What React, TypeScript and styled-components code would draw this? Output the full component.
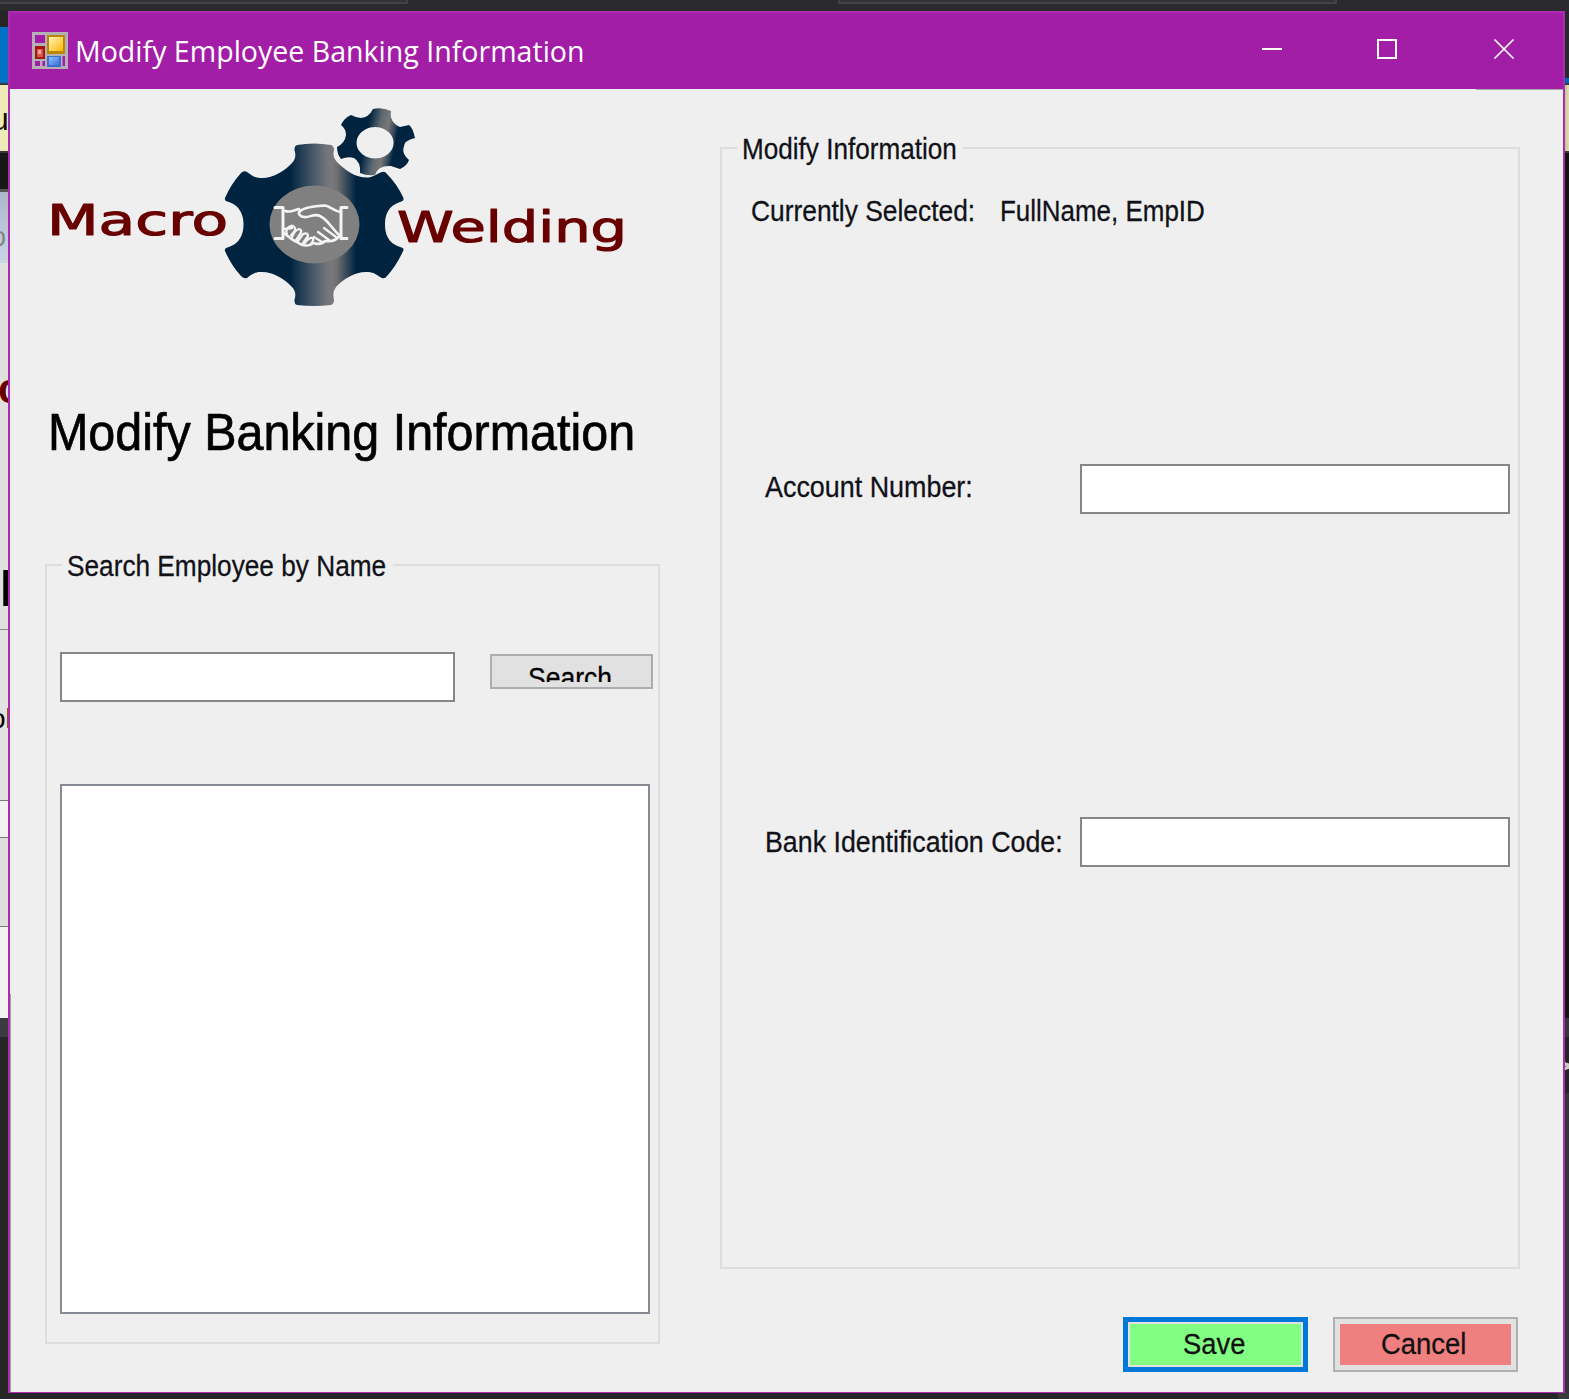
import React, { useLayoutEffect, useRef, useState } from "react";
import styled, { createGlobalStyle } from "styled-components";

const Global = createGlobalStyle`
  *, *::before, *::after { box-sizing: border-box; }
  body { margin: 0; background: #29292b; overflow: hidden; }
`;

const sans = `"Liberation Sans", Arial, sans-serif`;

/* ---------- text stretched to a given width ---------- */

const FitBox = styled.span<{ $w: number }>`
  display: block;
  width: ${(p) => p.$w}px;
  flex: none;
  white-space: pre;
`;
const FitInner = styled.span`
  display: inline-block;
  transform-origin: 0 50%;
  white-space: pre;
`;

function Fit({ w, children }: { w: number; children: string }) {
  const ref = useRef<HTMLSpanElement>(null);
  const [scale, setScale] = useState(1);
  useLayoutEffect(() => {
    if (ref.current) setScale(w / ref.current.offsetWidth);
  }, [w, children]);
  return (
    <FitBox $w={w}>
      <FitInner ref={ref} style={{ transform: `scaleX(${scale})` }}>
        {children}
      </FitInner>
    </FitBox>
  );
}

/* ---------- desktop behind the window ---------- */

const Desktop = styled.div`
  display: grid;
  grid-template-columns: 8px 1557px 4px;
  grid-template-rows: 11px 1382px 6px;
  width: 1569px;
  height: 1399px;
  background: #29292b;
`;
const TopStrip = styled.div`
  grid-column: 1 / -1;
  display: flex;
  gap: 430px;
  background: #2b2b2d;
`;
const Tab = styled.div<{ $w: number; $open?: boolean }>`
  width: ${(p) => p.$w}px;
  height: 4px;
  background: #333335;
  border: solid #434345;
  border-width: 0 2px 2px ${(p) => (p.$open ? 0 : 2)}px;
`;
const SideStrip = styled.div`
  display: flex;
  flex-direction: column;
  overflow: hidden;
`;
const Slice = styled.div<{ $h: number; $bg: string }>`
  flex: none;
  height: ${(p) => p.$h}px;
  background: ${(p) => p.$bg};
  overflow: hidden;
`;
const Peek = styled.span<{ $size: number; $top: number; $left: number; $color?: string; $bold?: boolean }>`
  display: block;
  margin: ${(p) => p.$top}px 0 0 ${(p) => p.$left}px;
  font: ${(p) => (p.$bold ? 700 : 400)} ${(p) => p.$size}px/1 ${sans};
  color: ${(p) => p.$color || "#111"};
`;
const BottomStrip = styled.div`
  grid-column: 1 / -1;
  background: linear-gradient(90deg, #262628 0 1558px, #39393c 1558px);
`;

/* ---------- window ---------- */

const Window = styled.div`
  display: flex;
  flex-direction: column;
  border: 2px solid #aa2cb0;
  border-bottom-width: 1px;
  background: #efefef;
`;
const TitleBar = styled.div`
  display: flex;
  flex: none;
  height: 76px;
  background: #a21ea6;
  color: #fff;
`;
const AppIcon = styled.svg`
  flex: none;
  margin: 19px 7px 0 22px;
`;
const Caption = styled.div`
  flex: 1;
  padding-top: 18px;
  font: 400 29px/40px "Open Sans", "Noto Sans", sans-serif;
`;
const WindowButtons = styled.svg`
  flex: none;
`;
const Body = styled.div`
  flex: 1;
  display: flex;
  gap: 60px;
  padding-left: 35px;
  font: 400 30px/36px ${sans};
  color: #111118;
  -webkit-text-stroke: 0.3px currentColor;
  background:
    linear-gradient(#a0a0a0, #a0a0a0) 0 905px / 1px 398px no-repeat,
    linear-gradient(#a9a9a9, #a9a9a9) 100% 0 / 87px 1px no-repeat;
`;
const LeftColumn = styled.div`
  display: flex;
  flex-direction: column;
  width: 615px;
`;
const RightColumn = styled.div`
  display: flex;
  flex-direction: column;
  width: 800px;
  padding-top: 58px;
`;
const Logo = styled.svg`
  display: block;
  flex: none;
  margin: 6px 0 0 0;
  -webkit-text-stroke: 0;
`;
const Heading = styled.h1`
  margin: 87px 0 0 3px;
  font: 400 52px/60px ${sans};
  color: #000;
  -webkit-text-stroke: 0.7px currentColor;
`;
const Group = styled.section<{ $h: number; $mt?: number }>`
  flex: none;
  height: ${(p) => p.$h}px;
  margin-top: ${(p) => p.$mt || 0}px;
  border: 2px solid #dddddd;
`;
const Legend = styled.div<{ $w: number; $pad: number }>`
  width: ${(p) => p.$w}px;
  height: 36px;
  margin: -18px 0 0 15px;
  padding-left: ${(p) => p.$pad}px;
  background: #efefef;
`;
const SearchRow = styled.div`
  display: flex;
  gap: 35px;
  margin: 68px 0 0 13px;
`;
const Field = styled.input<{ $w: number }>`
  width: ${(p) => p.$w}px;
  height: 50px;
  padding: 0 8px;
  border: 2px solid #868686;
  border-radius: 0;
  background: #fff;
  outline: none;
  font: inherit;
`;
const SearchButton = styled.button`
  width: 163px;
  height: 35px;
  margin-top: 2px;
  padding: 4px 0 5px 36px;
  border: 2px solid #adadad;
  background: #e1e1e1;
  font: 400 30px/36px ${sans};
  color: #000;
  text-align: left;
  display: block;
`;
const Clip = styled.span`
  display: block;
  height: 22px;
  overflow: hidden;
`;
const ListBox = styled.div`
  width: 590px;
  height: 530px;
  margin: 82px 0 0 13px;
  border: 2px solid #868b93;
  background: #fff;
`;
const SelectedRow = styled.div`
  display: flex;
  gap: 25px;
  margin: 26px 0 0 29px;
`;
const FieldRow = styled.label<{ $mt: number; $label: number }>`
  display: flex;
  justify-content: space-between;
  height: 50px;
  margin: ${(p) => p.$mt}px 8px 0 43px;
  & > span { padding-top: ${(p) => p.$label}px; }
`;
const Actions = styled.div`
  display: flex;
  justify-content: flex-end;
  gap: 25px;
  margin: 48px 2px 0 0;
`;
const ActionButton = styled.button<{ $fill: string; $edge: string; $edgeWidth: number }>`
  display: flex;
  width: 185px;
  height: 55px;
  padding: ${(p) => 7 - p.$edgeWidth}px;
  border: ${(p) => p.$edgeWidth}px solid ${(p) => p.$edge};
  background: #e1e1e1;
  font: 400 30px/36px ${sans};
  color: #111;
  & > span {
    display: flex;
    flex: 1;
    align-self: stretch;
    justify-content: center;
    padding: 2px 4px 0 0;
    background: ${(p) => p.$fill};
  }
`;

function FormIcon() {
  return (
    <AppIcon width="36" height="37" viewBox="0 0 36 37">
      <defs>
        <linearGradient id="gold" x1="0" y1="0" x2="1" y2="1">
          <stop offset="0" stopColor="#fff3c0" />
          <stop offset="1" stopColor="#fdb900" />
        </linearGradient>
        <linearGradient id="sky" x1="0" y1="0" x2="1" y2="1">
          <stop offset="0" stopColor="#8fc0ff" />
          <stop offset="1" stopColor="#3a72dc" />
        </linearGradient>
      </defs>
      <path
        fillRule="evenodd"
        fill="#b5b0b5"
        d="M0 0H36V37H0ZM3 3V11H13V3ZM3 29V34H8V29ZM10.500 29V34H13V29ZM30.500 24V34H33V24Z"
      />
      <rect x="3" y="14" width="10" height="13" fill="#a01810" />
      <rect x="5" y="17" width="6" height="8" fill="#d8574c" />
      <rect x="6" y="18" width="3" height="4" fill="#f0a49c" />
      <rect x="15" y="3" width="18" height="19" fill="#b98700" />
      <rect x="17" y="5" width="14" height="14" fill="url(#gold)" />
      <rect x="15" y="24" width="14" height="11" fill="#3f6fcb" />
      <rect x="17" y="25" width="10" height="8" fill="url(#sky)" />
    </AppIcon>
  );
}

function CompanyLogo() {
  return (
    <Logo width="590" height="220" viewBox="45 95 590 220">
      <defs>
        <linearGradient id="steel" gradientUnits="userSpaceOnUse" x1="290" y1="0" x2="356" y2="0">
          <stop offset="0" stopColor="#00233f" />
          <stop offset=".3" stopColor="#3d5163" />
          <stop offset=".55" stopColor="#70757a" />
          <stop offset=".64" stopColor="#7a7879" />
          <stop offset=".72" stopColor="#6c6e72" />
          <stop offset="1" stopColor="#00233f" />
        </linearGradient>
        <linearGradient id="steelSmall" gradientUnits="userSpaceOnUse" x1="365" y1="140" x2="395" y2="146">
          <stop offset="0" stopColor="#00233f" />
          <stop offset=".4" stopColor="#606a72" />
          <stop offset=".65" stopColor="#777" />
          <stop offset=".85" stopColor="#3c4c5c" />
          <stop offset="1" stopColor="#00233f" />
        </linearGradient>
      </defs>
      <path
        fill="url(#steel)"
        d="M297 145Q314 142 331 145Q334 146 334 150Q332 157 337 162C346 171 356 178 368 177.500C374 177 378 173 382 172Q385 171 387 174Q397 184 403.500 198Q404 201 400 202C388 206 385 215 385 224.500C385 234 388 243 400 247Q404 248 403.500 250Q397 265 387 276Q385 279 382 278C378 276 374 272 368 272C356 271 343 279 336 287Q332 292 334 300Q334 304 331 305Q314 307 297 305Q294 304 294.500 300Q297 292 292 287C285 279 272 271 260 272C254 272 250 276 247 278Q244 279 241 276Q231 265 225 251Q224 248 229 247C240 243 243.500 234 243.500 224.500C243.500 215 240 206 229 202Q224 201 225 198Q231 184 241 173Q244 170 247 172C250 174 254 178 260 178C272 179 285 171 292 163Q297 158 294.500 150Q294 146 297 145Z"
      />
      <ellipse cx="314.500" cy="224.500" rx="45" ry="39" fill="#808080" />
      <g fill="none" stroke="#f4f4f4" strokeLinecap="round" strokeLinejoin="round" strokeWidth="2.600">
        <path d="M275 207.500H283V238.500H275M347 207.500H341V238.500H347" strokeWidth="3" />
        <path d="M285 211C291 213 294 210 299 209M285 229L292 228" />
        <path d="M341 212C333 211 330 206 325 205.500C316 206 305 207 300 211C297 214 301 217 304 217C309 218 314 213 320 216C327 219 330 226 338 234" />
        <path d="M284 233C289 237 292 240 297 242C302 246 309 247 313 243C319 245 322 244 325 241C332 242 337 240 340 235" />
        <path d="M287 234Q285 230 289 227Q293 224 295 228Q296 231 291 235M292 237Q295 230 299 229Q303 230 300 234L296 240M298 241L303 234Q308 232 308 236L303 243M305 243Q309 237 313 238Q314 241 310 245" strokeWidth="2.200" />
        <path d="M314 237L322 242M318 232L329 240M324 228L336 237" strokeWidth="2.200" />
      </g>
      <path
        fill="url(#steelSmall)"
        fillRule="evenodd"
        d="M373 109Q382 107 391 111Q389 122 400 127L409 125Q413 128 415 138Q404 140 403.500 148Q402 154 409 160Q407 166 400 169L391 166Q378 165 375 175Q367 176 360 173Q361 162 354 158Q348 156 341 159Q337 154 337 147Q345 143 346 135Q346 129 341 125Q344 118 351 115Q366 123 373 109ZM375 127A18.500 15.800 0 1 0 375.100 127Z"
      />
      <g fill="#680000" stroke="#680000" strokeWidth="1.100" strokeLinejoin="round" fontFamily='"DejaVu Sans", sans-serif' fontSize="42">
        <text x="47" y="234.500" textLength="181" lengthAdjust="spacingAndGlyphs">Macro</text>
        <text x="397" y="241.500" textLength="230" lengthAdjust="spacingAndGlyphs">Welding</text>
      </g>
    </Logo>
  );
}

export default function App() {
  return (
    <Desktop>
      <Global />
      <TopStrip>
        <Tab $w={408} $open />
        <Tab $w={499} />
      </TopStrip>
      <SideStrip>
        <Slice $h={16} $bg="#262628" />
        <Slice $h={56} $bg="#0072c4" />
        <Slice $h={2} $bg="#38383c" />
        <Slice $h={66} $bg="#efebb8">
          <Peek $size={32} $top={18} $left={-9}>u</Peek>
        </Slice>
        <Slice $h={41} $bg="linear-gradient(#38383c 2px, #171717 2px 38px, #555 38px)" />
        <Slice $h={71} $bg="linear-gradient(#abb8c8, #c8d6e6)">
          <Peek $size={27} $top={32} $left={-9} $color="#858585">o</Peek>
        </Slice>
        <Slice $h={366} $bg="#e0e0e0">
          <Peek $size={42} $top={105} $left={-2} $color="#680000" $bold>c</Peek>
          <Peek $size={52} $top={152} $left={-1} $color="#000">E</Peek>
        </Slice>
        <Slice $h={171} $bg="linear-gradient(#888 1px, #e2e2e2 1px)">
          <Peek $size={28} $top={76} $left={-10} $color="#000">ol</Peek>
        </Slice>
        <Slice $h={37} $bg="linear-gradient(#777 1px, #f2f2f2 1px)" />
        <Slice $h={89} $bg="linear-gradient(#777 1px, #dedede 1px)" />
        <Slice $h={92} $bg="linear-gradient(#777 1px, #f2f2f2 1px)" />
        <Slice $h={19} $bg="#3a3a40" />
        <Slice $h={356} $bg="#262627" />
      </SideStrip>

      <Window>
        <TitleBar>
          <FormIcon />
          <Caption>
            <Fit w={510}>Modify Employee Banking Information</Fit>
          </Caption>
          <WindowButtons width="311" height="76" viewBox="1252 13 311 76" fill="none" stroke="#fff" strokeWidth="2">
            <path d="M1262 49H1282M1378 40H1396V58H1378Z" />
            <path d="M1494.500 39.500L1513.500 58.500M1513.500 39.500L1494.500 58.500" strokeWidth="1.700" />
          </WindowButtons>
        </TitleBar>
        <Body>
          <LeftColumn>
            <CompanyLogo />
            <Heading>
              <Fit w={587}>Modify Banking Information</Fit>
            </Heading>
            <Group $h={780} $mt={102}>
              <Legend $w={331} $pad={5}>
                <Fit w={319}>Search Employee by Name</Fit>
              </Legend>
              <SearchRow>
                <Field $w={395} />
                <SearchButton>
                  <Clip>
                    <Fit w={84}>Search</Fit>
                  </Clip>
                </SearchButton>
              </SearchRow>
              <ListBox />
            </Group>
          </LeftColumn>
          <RightColumn>
            <Group $h={1122}>
              <Legend $w={226} $pad={5}>
                <Fit w={215}>Modify Information</Fit>
              </Legend>
              <SelectedRow>
                <Fit w={224}>Currently Selected:</Fit>
                <Fit w={205}>FullName, EmpID</Fit>
              </SelectedRow>
              <FieldRow $mt={235} $label={5}>
                <Fit w={208}>Account Number:</Fit>
                <Field $w={430} />
              </FieldRow>
              <FieldRow $mt={303} $label={7}>
                <Fit w={298}>Bank Identification Code:</Fit>
                <Field $w={430} />
              </FieldRow>
            </Group>
            <Actions>
              <ActionButton $fill="#82ff82" $edge="#0078d7" $edgeWidth={5}>
                <span>
                  <Fit w={62}>Save</Fit>
                </span>
              </ActionButton>
              <ActionButton $fill="#f08080" $edge="#b0b0b0" $edgeWidth={2}>
                <span>
                  <Fit w={85}>Cancel</Fit>
                </span>
              </ActionButton>
            </Actions>
          </RightColumn>
        </Body>
      </Window>

      <SideStrip>
        <Slice $h={67} $bg="#29292b" />
        <Slice $h={5} $bg="#0068b0" />
        <Slice $h={2} $bg="#38383c" />
        <Slice $h={66} $bg="linear-gradient(90deg, #c8c49a, #e0dcb0)" />
        <Slice $h={867} $bg="linear-gradient(#38383c 2px, #131313 2px)" />
        <Slice $h={19} $bg="#35353a" />
        <Slice $h={56} $bg="#242426">
          <Peek $size={30} $top={14} $left={-12} $color="#ccc" $bold>&gt;</Peek>
        </Slice>
        <Slice $h={300} $bg="#343437" />
      </SideStrip>
      <BottomStrip />
    </Desktop>
  );
}
